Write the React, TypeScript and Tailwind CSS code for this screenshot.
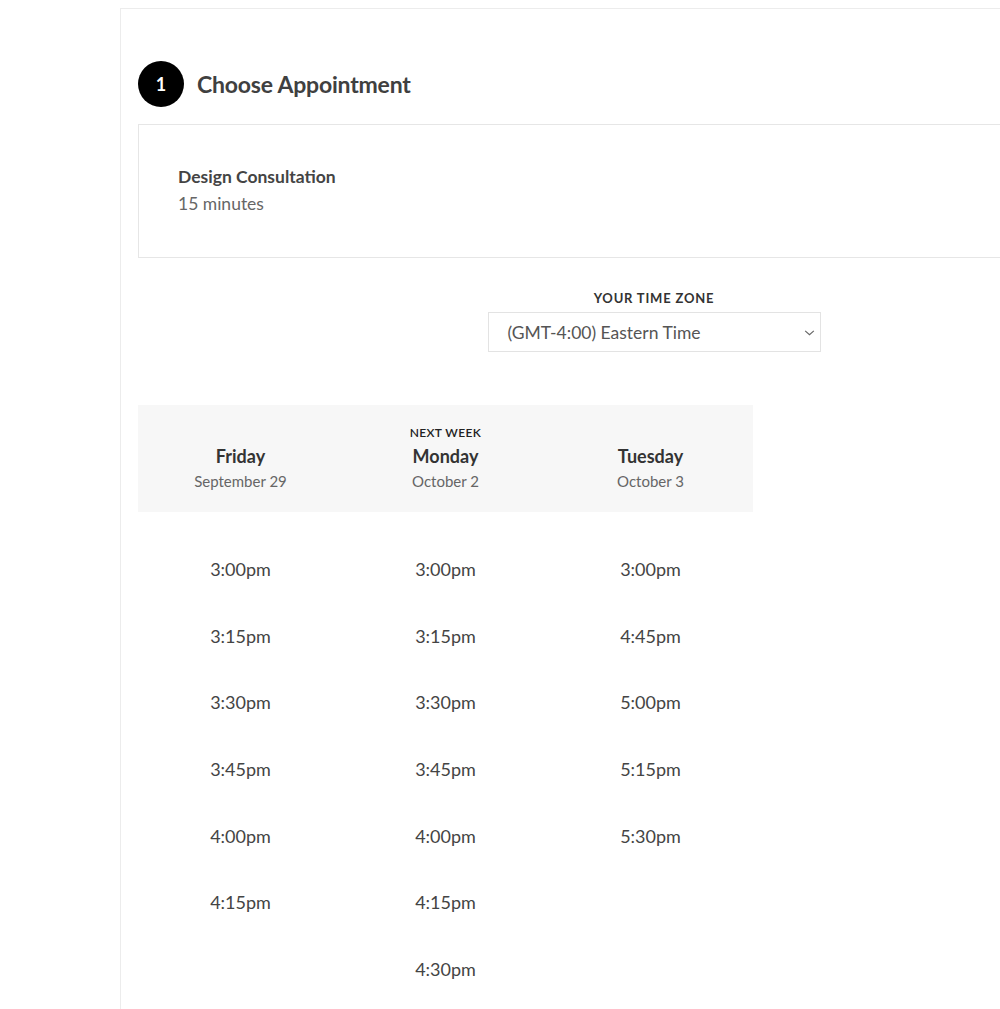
import React from "react";

const days = [
    { label: "", name: "Friday", date: "September 29", times: ["3:00pm", "3:15pm", "3:30pm", "3:45pm", "4:00pm", "4:15pm"] },
    { label: "NEXT WEEK", name: "Monday", date: "October 2", times: ["3:00pm", "3:15pm", "3:30pm", "3:45pm", "4:00pm", "4:15pm", "4:30pm"] },
    { label: "", name: "Tuesday", date: "October 3", times: ["3:00pm", "4:45pm", "5:00pm", "5:15pm", "5:30pm"] },
];

const App: React.FC = () => {
    return (
        <div className="w-[1000px] h-[1009px] overflow-hidden bg-white font-['Lato',sans-serif]">
            <div className="ml-[120px] mt-[8px] w-[1068px] border-l border-t border-[#ececec] pl-[17px] pr-[18px] pt-[52px]">
                {/* step heading */}
                <div className="flex items-center">
                    <div className="w-[46px] h-[46px] rounded-full bg-black text-white flex items-center justify-center text-[18px] font-bold">
                        1
                    </div>
                    <h1 className="ml-[13px] text-[23px] font-bold text-[#404040] tracking-[-0.2px]">Choose Appointment</h1>
                </div>

                {/* appointment type card */}
                <div className="mt-[17px] h-[134px] border border-[#e6e6e6] px-[39px] pt-[40px]">
                    <p className="text-[17.5px] font-bold text-[#444] leading-[24px]">Design Consultation</p>
                    <p className="text-[17.5px] text-[#666] leading-[24px] mt-[3px]">15 minutes</p>
                </div>

                {/* time zone */}
                <div className="mt-[31px] flex flex-col items-center">
                    <label className="text-[13px] font-bold tracking-[0.8px] text-[#333] leading-[18px]">YOUR TIME ZONE</label>
                    <div className="mt-[5px] w-[333px] h-[40px] border border-[#e3e3e3] flex items-center justify-between pl-[19px] pr-[4px]">
                        <span className="text-[17.5px] text-[#555] mt-[2px]">(GMT-4:00) Eastern Time</span>
                        <svg width="13" height="13" viewBox="0 0 12 12" fill="none" stroke="#666" strokeWidth="1.1">
                            <path d="M2 4.5 L6 8 L10 4.5" />
                        </svg>
                    </div>
                </div>

                {/* calendar */}
                <div className="mt-[53px] w-[615px]">
                    <div className="grid grid-cols-3 bg-[#f7f7f7] h-[107px] pt-[21px]">
                        {days.map((day) => (
                            <div key={day.name} className="flex flex-col items-center">
                                <span className="h-[14px] text-[12px] font-semibold tracking-[0.4px] text-[#222] leading-[14px]">{day.label}</span>
                                <span className="mt-[5px] text-[18px] font-bold text-[#333] leading-[22px]">{day.name}</span>
                                <span className="mt-[4px] text-[15px] text-[#666] leading-[20px]">{day.date}</span>
                            </div>
                        ))}
                    </div>
                    <div className="grid grid-cols-3 pt-[45px]">
                        {days.map((day) => (
                            <div key={day.name} className="flex flex-col items-center">
                                {day.times.map((t) => (
                                    <span key={t} className="h-[66.7px] text-[18px] text-[#444] leading-[24px]">{t}</span>
                                ))}
                            </div>
                        ))}
                    </div>
                </div>
            </div>
        </div>
    );
};

export default App;
